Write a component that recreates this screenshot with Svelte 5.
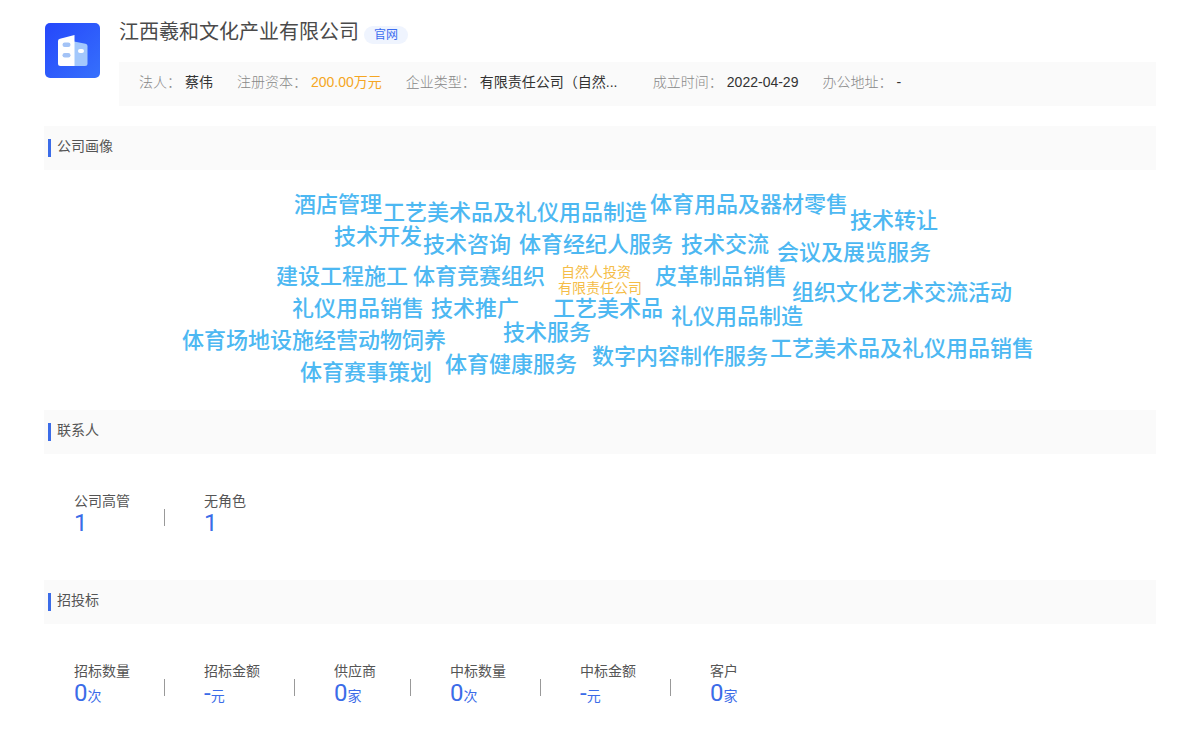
<script>
  const facts = [
    { label: '法人', value: '蔡伟' },
    { label: '注册资本', value: '200.00万元', highlight: true },
    { label: '企业类型', value: '有限责任公司（自然...', wide: true },
    { label: '成立时间', value: '2022-04-29' },
    { label: '办公地址', value: '-' },
  ];

  // x is measured from the centre of the cloud, y from its top
  const words = [
    { text: '酒店管理', x: -306, y: 19 },
    { text: '工艺美术品及礼仪用品制造', x: -217, y: 27 },
    { text: '体育用品及器材零售', x: 50, y: 19 },
    { text: '技术转让', x: 250, y: 35 },
    { text: '技术开发', x: -266, y: 51 },
    { text: '技术咨询', x: -177, y: 59 },
    { text: '体育经纪人服务', x: -81, y: 59 },
    { text: '技术交流', x: 81, y: 59 },
    { text: '会议及展览服务', x: 177, y: 67 },
    { text: '建设工程施工', x: -324, y: 91 },
    { text: '体育竞赛组织', x: -187, y: 91 },
    { text: '皮革制品销售', x: 55, y: 91 },
    { text: '组织文化艺术交流活动', x: 192, y: 107 },
    { text: '礼仪用品销售', x: -308, y: 123 },
    { text: '技术推广', x: -169, y: 123 },
    { text: '工艺美术品', x: -47, y: 123 },
    { text: '礼仪用品制造', x: 71, y: 131 },
    { text: '体育场地设施经营动物饲养', x: -418, y: 155 },
    { text: '技术服务', x: -97, y: 147 },
    { text: '体育赛事策划', x: -300, y: 187 },
    { text: '体育健康服务', x: -155, y: 179 },
    { text: '数字内容制作服务', x: -8, y: 171 },
    { text: '工艺美术品及礼仪用品销售', x: 170, y: 163 },
  ];

  const contacts = [
    { label: '公司高管', value: '1' },
    { label: '无角色', value: '1' },
  ];

  const bids = [
    { label: '招标数量', value: '0', unit: '次' },
    { label: '招标金额', value: '-', unit: '元' },
    { label: '供应商', value: '0', unit: '家' },
    { label: '中标数量', value: '0', unit: '次' },
    { label: '中标金额', value: '-', unit: '元' },
    { label: '客户', value: '0', unit: '家' },
  ];
</script>

{#snippet stats(items)}
  <dl class="stats">
    {#each items as item}
      <div class="stat">
        <dt>{item.label}</dt>
        <dd>{item.value}{#if item.unit}<small>{item.unit}</small>{/if}</dd>
      </div>
    {/each}
  </dl>
{/snippet}

<main lang="zh-CN">
  <header>
    <svg class="logo" viewBox="0 0 55 55" aria-hidden="true">
      <defs>
        <linearGradient id="tile" x1="0" y1="0" x2="1" y2="1">
          <stop offset="0" stop-color="#2547fb" />
          <stop offset="1" stop-color="#3670fc" />
        </linearGradient>
      </defs>
      <rect width="55" height="55" rx="5" fill="url(#tile)" />
      <path d="M29 18.500 40.500 20.800Q42.500 21.300 42.500 23V40.500Q42.500 43 40 43H29Z" fill="#a3c8fc" />
      <path d="M15 15.800 29.500 12V43H15.500Q13 43 13 40.500V18Q13 16.300 15 15.800Z" fill="#fff" />
      <rect x="17.500" y="19.500" width="8" height="4.500" rx="2.200" fill="#a3c3f6" />
      <rect x="17.500" y="30" width="8" height="4.500" rx="2.200" fill="#a3c3f6" />
      <rect x="33" y="26" width="6" height="4" rx="2" fill="#fff" />
    </svg>
    <div class="company">
      <div class="title">
        <h1>江西羲和文化产业有限公司</h1>
        <a href="#website">官网</a>
      </div>
      <dl class="facts">
        {#each facts as fact}
          <div class="fact">
            <dt>{fact.label}：</dt>
            <dd class:highlight={fact.highlight} class:wide={fact.wide}>{fact.value}</dd>
          </div>
        {/each}
      </dl>
    </div>
  </header>

  <section>
    <h2>公司画像</h2>
    <div class="cloud">
      {#each words as word}
        <span class="word" style="left: calc(50% + {word.x}px); top: {word.y}px">{word.text}</span>
      {/each}
      <span class="core">自然人投资&nbsp;&nbsp;<br />有限责任公司</span>
    </div>
  </section>

  <section>
    <h2>联系人</h2>
    {@render stats(contacts)}
  </section>

  <section>
    <h2>招投标</h2>
    {@render stats(bids)}
  </section>
</main>

<style>
  :global(body) {
    margin: 0;
    background: #fff;
  }

  main {
    padding: 20px 44px 0;
    font-family: 'Liberation Sans', 'Noto Sans CJK SC', sans-serif;
    font-size: 14px;
    line-height: 20px;
    color: #555;
  }

  h1, h2, dl, dd {
    margin: 0;
    font-weight: 400;
  }

  header {
    display: flex;
    gap: 19px;
    margin-bottom: 20px;
  }

  .logo {
    flex: none;
    width: 55px;
    height: 55px;
    margin: 3px 0 0 1px;
  }

  .company {
    flex: 1;
    min-width: 0;
  }

  .title {
    display: flex;
    align-items: flex-start;
    gap: 5px;
    height: 42px;
  }

  h1 {
    font-size: 20px;
    line-height: 24px;
    color: #4a4a4a;
  }

  .title a {
    margin-top: 6px;
    padding: 0 10px;
    border-radius: 9px;
    background: #eff4fe;
    color: #3b6cf0;
    font-size: 12px;
    line-height: 18px;
    text-decoration: none;
  }

  .facts {
    display: flex;
    gap: 24px;
    padding: 10px 20px 14px;
    background: #fafafa;
    white-space: nowrap;
  }

  .fact {
    display: flex;
    gap: 4px;
  }

  .fact dt {
    color: #888;
    font-weight: 300;
  }

  .fact dd {
    color: #333;
  }

  .fact .highlight {
    color: #f5a623;
  }

  .fact .wide {
    min-width: 149px;
  }

  h2 {
    display: flex;
    align-items: flex-start;
    gap: 6px;
    padding: 10px 4px 13px;
    background: #fafafa;
    font-size: 14px;
    line-height: 21px;
    color: #555;
  }

  h2::before {
    content: '';
    width: 3px;
    height: 18px;
    margin-top: 3px;
    background: #3b6ce8;
  }

  .cloud {
    position: relative;
    height: 240px;
    white-space: nowrap;
  }

  .word {
    position: absolute;
    color: #4db8f2;
    font-size: 22px;
    font-weight: 500;
    line-height: 32px;
  }

  .core {
    position: absolute;
    top: 94px;
    left: 50%;
    transform: translateX(-50%);
    color: #f5bd48;
    font-size: 14px;
    line-height: 16px;
    text-align: center;
  }

  .stats {
    display: flex;
    height: 89px;
    padding: 37px 30px 0;
  }

  .stat {
    position: relative;
    padding-right: 74px;
  }

  .stat:not(:last-child)::after {
    content: '';
    position: absolute;
    top: 18px;
    right: 39px;
    width: 1px;
    height: 17px;
    background: #999;
  }

  .stat dd {
    color: #3b6ce8;
    font-family: Roboto, 'Noto Sans CJK SC', sans-serif;
    font-size: 24px;
    line-height: 24px;
  }

  .stat small {
    font-size: 14px;
  }
</style>
